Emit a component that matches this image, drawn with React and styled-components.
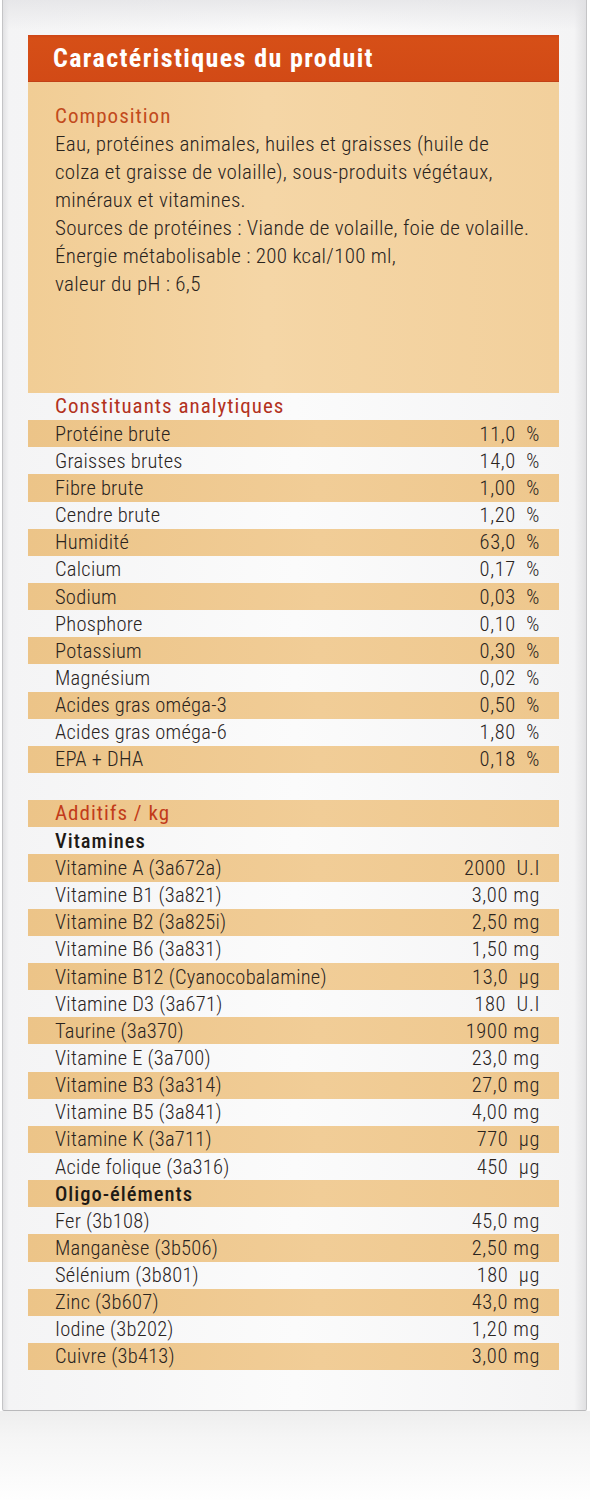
import React from "react";
import styled, { createGlobalStyle } from "styled-components";

const GlobalStyle = createGlobalStyle`
  html, body {
    margin: 0;
    padding: 0;
    background: #ffffff;
  }
  body {
    font-family: "Roboto Condensed", "DejaVu Sans Condensed", sans-serif;
    color: #2a241e;
  }
`;

const Page = styled.div`
  width: 590px;
  height: 1500px;
  display: flex;
  flex-direction: column;
  overflow: hidden;
  background: #ffffff;
`;

const Box = styled.div`
  box-sizing: border-box;
  height: 1411px;
  flex-shrink: 0;
  margin: 0 3px 0 2px;
  padding: 35px 27px 0 25px;
  border: 1px solid #c4c4c6;
  border-top: none;
  border-bottom-color: #b9b9bb;
  border-radius: 0 0 2px 2px;
  background:
    linear-gradient(180deg, rgba(225, 225, 228, 0.7) 0, rgba(255, 255, 255, 0) 30px),
    linear-gradient(90deg, #e2e2e4 0, #f4f4f5 6px, #fbfbfb 50%, #f4f4f5 98%, #e0e0e2 100%);
`;

const Floor = styled.div`
  flex: 1;
  background: linear-gradient(180deg, #eeeeee 0%, #f5f5f5 30%, #fefefe 100%);
`;

const Panel = styled.div`
  display: flex;
  flex-direction: column;
`;

const Header = styled.div`
  height: 47px;
  display: flex;
  align-items: center;
  padding-left: 25px;
  background: linear-gradient(180deg, #cd4517 0, #d64f17 3px, #d24a16 100%);
  border-bottom: 1px solid #c24016;
  box-sizing: border-box;
`;

const Title = styled.h1`
  margin: 0;
  font-size: 26px;
  font-weight: 700;
  color: #ffffff;
  letter-spacing: 1.4px;
`;

const Composition = styled.div`
  height: 311px;
  box-sizing: border-box;
  padding: 21px 16px 0 27px;
  background: linear-gradient(90deg, #f1cd95 0%, #f5d6a6 45%, #f2d09c 100%);
`;

const SectionTitle = styled.div`
  font-size: 21px;
  font-weight: 400;
  line-height: 27px;
  color: ${(p) => p.$color || "#c24a1c"};
  letter-spacing: 1px;
`;

const Body = styled.p`
  margin: 0;
  font-size: 21px;
  font-weight: 300;
  line-height: 28px;
  letter-spacing: 0.3px;
  color: #2a241e;
`;

const Table = styled.div`
  display: flex;
  flex-direction: column;
`;

const Row = styled.div`
  height: 27.15px;
  display: flex;
  align-items: center;
  justify-content: space-between;
  padding: 0 19px 0 27px;
  background: ${(p) =>
    p.$shade
      ? "linear-gradient(90deg, #ecc488 0%, #f1cd97 55%, #eec78d 100%)"
      : "transparent"};
`;

const Label = styled.span`
  font-size: 20.5px;
  font-weight: ${(p) => (p.$bold ? 500 : 300)};
  letter-spacing: ${(p) => (p.$bold ? "1px" : "0.25px")};
  color: ${(p) => (p.$bold ? "#1e1a16" : "#2a241e")};
  white-space: pre;
`;

const Value = styled.span`
  font-size: 20.5px;
  font-weight: 300;
  letter-spacing: 0.6px;
  color: #2a241e;
  white-space: pre;
  text-align: right;
`;

const rows = [
  { head: "Constituants analytiques", color: "#b3321d" },
  ["Protéine brute", "11,0  %"],
  ["Graisses brutes", "14,0  %"],
  ["Fibre brute", "1,00  %"],
  ["Cendre brute", "1,20  %"],
  ["Humidité", "63,0  %"],
  ["Calcium", "0,17  %"],
  ["Sodium", "0,03  %"],
  ["Phosphore", "0,10  %"],
  ["Potassium", "0,30  %"],
  ["Magnésium", "0,02  %"],
  ["Acides gras oméga-3", "0,50  %"],
  ["Acides gras oméga-6", "1,80  %"],
  ["EPA + DHA", "0,18  %"],
  { empty: true },
  { head: "Additifs / kg", color: "#c23b1a" },
  { sub: "Vitamines" },
  ["Vitamine A (3a672a)", "2000  U.I"],
  ["Vitamine B1 (3a821)", "3,00 mg"],
  ["Vitamine B2 (3a825i)", "2,50 mg"],
  ["Vitamine B6 (3a831)", "1,50 mg"],
  ["Vitamine B12 (Cyanocobalamine)", "13,0  µg"],
  ["Vitamine D3 (3a671)", "180  U.I"],
  ["Taurine (3a370)", "1900 mg"],
  ["Vitamine E (3a700)", "23,0 mg"],
  ["Vitamine B3 (3a314)", "27,0 mg"],
  ["Vitamine B5 (3a841)", "4,00 mg"],
  ["Vitamine K (3a711)", "770  µg"],
  ["Acide folique (3a316)", "450  µg"],
  { sub: "Oligo-éléments" },
  ["Fer (3b108)", "45,0 mg"],
  ["Manganèse (3b506)", "2,50 mg"],
  ["Sélénium (3b801)", "180  µg"],
  ["Zinc (3b607)", "43,0 mg"],
  ["Iodine (3b202)", "1,20 mg"],
  ["Cuivre (3b413)", "3,00 mg"],
];

function TableRow({ item, shade }) {
  if (item.head) {
    return (
      <Row $shade={shade}>
        <SectionTitle $color={item.color}>{item.head}</SectionTitle>
      </Row>
    );
  }
  if (item.sub) {
    return (
      <Row $shade={shade}>
        <Label $bold>{item.sub}</Label>
      </Row>
    );
  }
  if (item.empty) return <Row $shade={shade} />;
  return (
    <Row $shade={shade}>
      <Label>{item[0]}</Label>
      <Value>{item[1]}</Value>
    </Row>
  );
}

export default function App() {
  return (
    <>
      <GlobalStyle />
      <Page>
        <Box>
          <Panel>
            <Header>
              <Title>Caractéristiques du produit</Title>
            </Header>
            <Composition>
              <SectionTitle>Composition</SectionTitle>
              <Body>
                Eau, protéines animales, huiles et graisses (huile de
                <br />
                colza et graisse de volaille), sous-produits végétaux,
                <br />
                minéraux et vitamines.
                <br />
                Sources de protéines : Viande de volaille, foie de volaille.
                <br />
                Énergie métabolisable : 200 kcal/100 ml,
                <br />
                valeur du pH : 6,5
              </Body>
            </Composition>
            <Table>
              {rows.map((item, i) => (
                <TableRow key={i} item={item} shade={i % 2 === 1} />
              ))}
            </Table>
          </Panel>
        </Box>
        <Floor />
      </Page>
    </>
  );
}
